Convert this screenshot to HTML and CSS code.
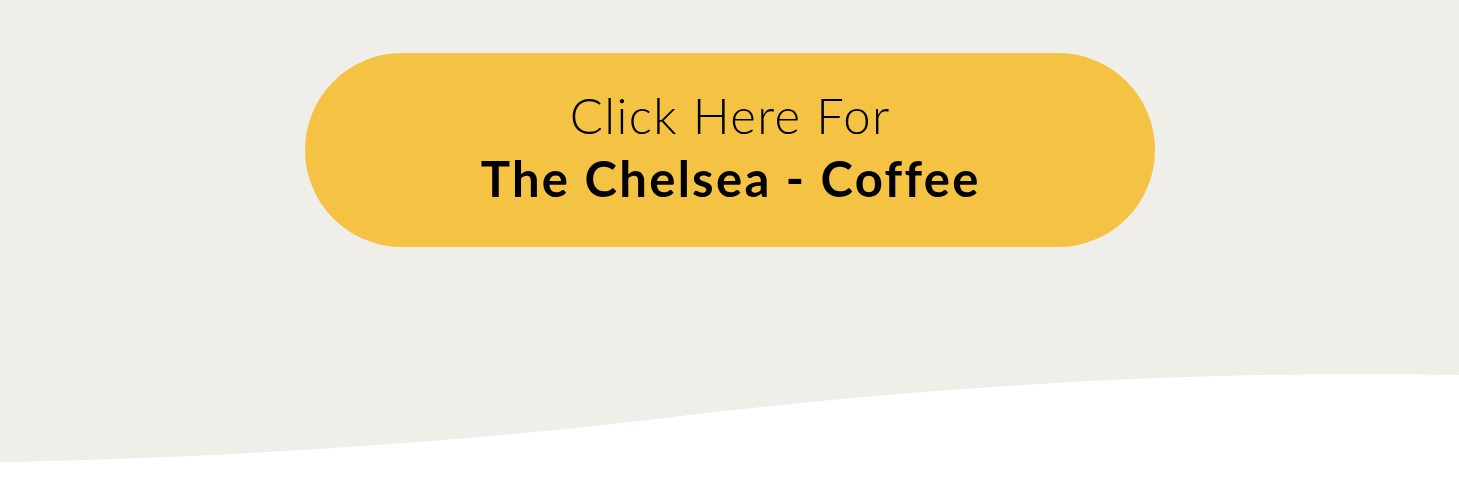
FILE: index.html
```html
<!DOCTYPE html>
<html lang="en">
<head>
    <title>The Chelsea - Coffee</title>
    <link rel="stylesheet" href="styles.css">
</head>
<body>
    <section class="hero">
        <a class="cta" href="#">
            <span class="cta-lead">Click Here For</span>
            <span class="cta-name">The Chelsea - Coffee</span>
        </a>
        <svg class="wave" viewBox="0 0 1459 124" preserveAspectRatio="none">
            <path d="M0 102.3 C233 97 467 83 700 53.8 C953 25 1206 10 1459 15 L1459 124 L0 124 Z" fill="#ffffff"/>
        </svg>
    </section>
</body>
</html>
```

FILE: styles.css
```css
body {
    margin: 0;
    font-family: Lato, "Open Sans", sans-serif;
    background-color: #ffffff;
}
.hero {
    display: flex;
    flex-direction: column;
    align-items: center;
    height: 484px;
    padding-top: 53px;
    box-sizing: border-box;
    background-color: #efeee9;
}
.cta {
    display: flex;
    flex-direction: column;
    align-items: center;
    justify-content: center;
    width: 850px;
    height: 194px;
    padding-bottom: 6px;
    box-sizing: border-box;
    border-radius: 97px;
    background-color: #f5c344;
    color: #000000;
    text-decoration: none;
    line-height: 63px;
    font-size: 49px;
}
.cta-lead {
    font-weight: 300;
    letter-spacing: 1.4px;
    margin-right: -1.4px;
}
.cta-name {
    font-weight: 700;
    letter-spacing: 2.3px;
    margin-right: -2.3px;
}
.wave {
    display: block;
    width: 100%;
    height: 124px;
    margin-top: auto;
}
```
